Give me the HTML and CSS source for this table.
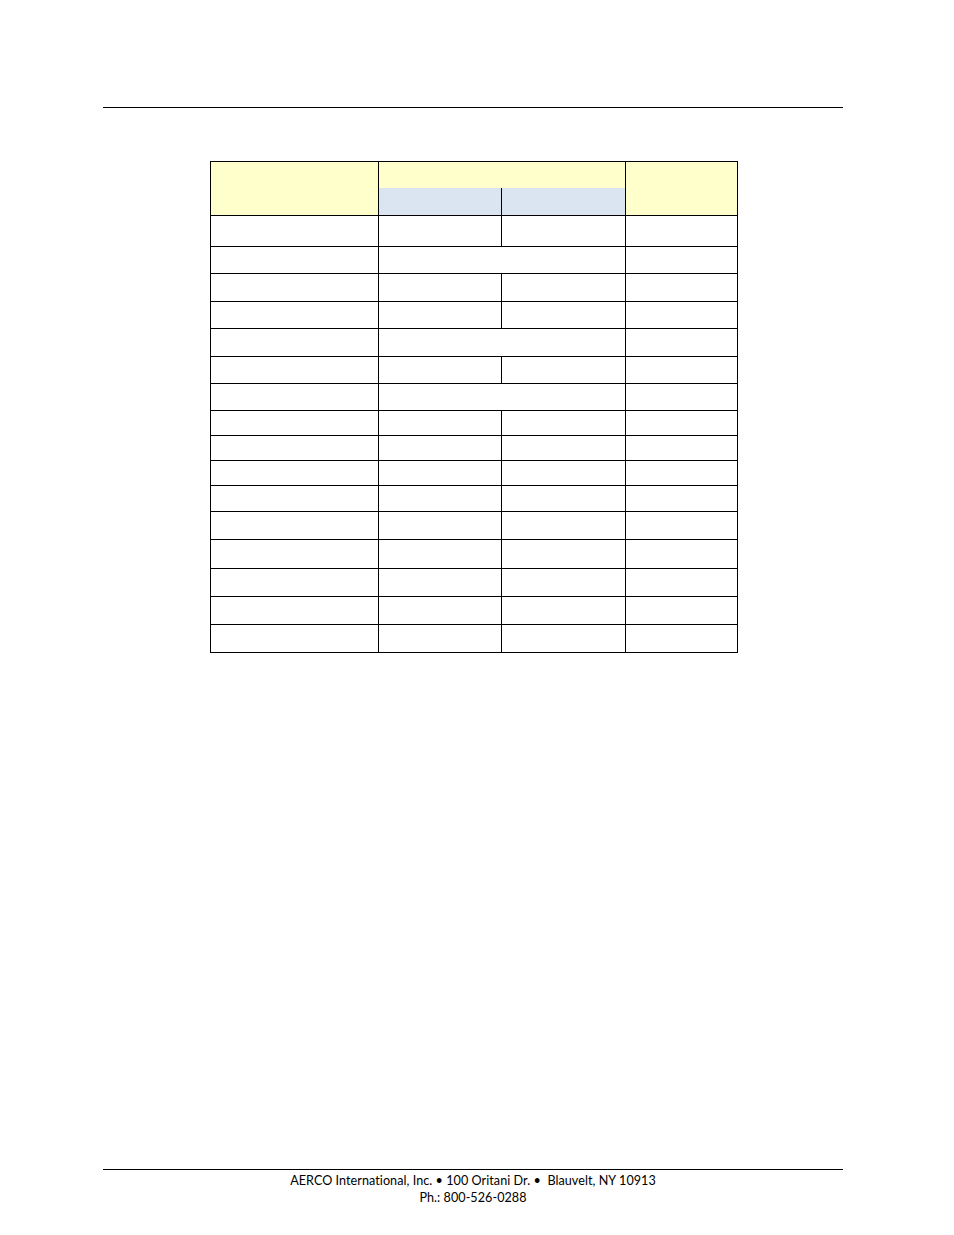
FILE: index.html
```html
<!DOCTYPE html>
<html>
<head>
<meta charset="utf-8">
<link rel="stylesheet" href="styles.css">
</head>
<body>
<div class="page">
  <div class="rule top-rule"></div>
  <div class="spec-table">
    <div class="c h-left yellow"></div>
    <div class="c h-mid yellow"></div>
    <div class="c h-right yellow"></div>
    <div class="c h-sub blue"></div>
    <div class="c h-sub blue"></div>

    <div class="c r31"></div><div class="c r31"></div><div class="c r31"></div><div class="c r31"></div>
    <div class="c r27"></div><div class="c r27 span2"></div><div class="c r27"></div>
    <div class="c r28"></div><div class="c r28"></div><div class="c r28"></div><div class="c r28"></div>
    <div class="c r27"></div><div class="c r27"></div><div class="c r27"></div><div class="c r27"></div>
    <div class="c r28"></div><div class="c r28 span2"></div><div class="c r28"></div>
    <div class="c r27"></div><div class="c r27"></div><div class="c r27"></div><div class="c r27"></div>
    <div class="c r27"></div><div class="c r27 span2"></div><div class="c r27"></div>
    <div class="c r25"></div><div class="c r25"></div><div class="c r25"></div><div class="c r25"></div>
    <div class="c r25"></div><div class="c r25"></div><div class="c r25"></div><div class="c r25"></div>
    <div class="c r25"></div><div class="c r25"></div><div class="c r25"></div><div class="c r25"></div>
    <div class="c r26"></div><div class="c r26"></div><div class="c r26"></div><div class="c r26"></div>
    <div class="c r28"></div><div class="c r28"></div><div class="c r28"></div><div class="c r28"></div>
    <div class="c r29"></div><div class="c r29"></div><div class="c r29"></div><div class="c r29"></div>
    <div class="c r28"></div><div class="c r28"></div><div class="c r28"></div><div class="c r28"></div>
    <div class="c r28"></div><div class="c r28"></div><div class="c r28"></div><div class="c r28"></div>
    <div class="c r28"></div><div class="c r28"></div><div class="c r28"></div><div class="c r28"></div>
  </div>
  <div class="rule bottom-rule"></div>
  <div class="footer">
    <div>AERCO International, Inc. • 100 Oritani Dr. •&nbsp; Blauvelt, NY 10913</div>
    <div>Ph.: 800-526-0288</div>
  </div>
</div>
</body>
</html>
```

FILE: styles.css
```css
html, body {
  margin: 0;
  padding: 0;
  background: #ffffff;
}

.page {
  width: 954px;
  height: 1235px;
  position: relative;
  font-family: "Lato", "Liberation Sans", sans-serif;
  color: #000;
}

.rule {
  margin-left: 103px;
  width: 740px;
  height: 0;
  border-top: 1px solid #000;
}

.top-rule {
  padding-top: 107px;
  border-top: none;
  border-bottom: 1px solid #000;
  height: 0;
}

.spec-table {
  margin-top: 53px;
  margin-left: 210px;
  width: 528px;
  box-sizing: border-box;
  display: grid;
  grid-template-columns: 168px 123px 124px 112px;
  border-left: 1px solid #000;
  border-top: 1px solid #000;
}

.c {
  box-sizing: border-box;
  border-right: 1px solid #000;
  border-bottom: 1px solid #000;
  background: #fff;
}

.yellow { background: #ffffcc; }
.blue { background: #dbe5f1; }

.h-left {
  grid-row: span 2;
  height: 54px;
}

.h-mid {
  grid-column: span 2;
  height: 26px;
  border-bottom: none;
}

.h-right {
  grid-row: span 2;
  height: 54px;
}

.h-sub {
  height: 28px;
}

.span2 { grid-column: span 2; }

.r25 { height: 25px; }
.r26 { height: 26px; }
.r27 { height: 27px; }
.r28 { height: 28px; }
.r29 { height: 29px; }
.r31 { height: 31px; }

.bottom-rule {
  margin-top: 516px;
}

.footer {
  margin-left: 103px;
  width: 740px;
  text-align: center;
  font-size: 12.6px;
  line-height: 17px;
  padding-top: 2px;
  font-variant-ligatures: none;
  font-feature-settings: "liga" 0, "dlig" 0;
  letter-spacing: 0.05px;
}
```
